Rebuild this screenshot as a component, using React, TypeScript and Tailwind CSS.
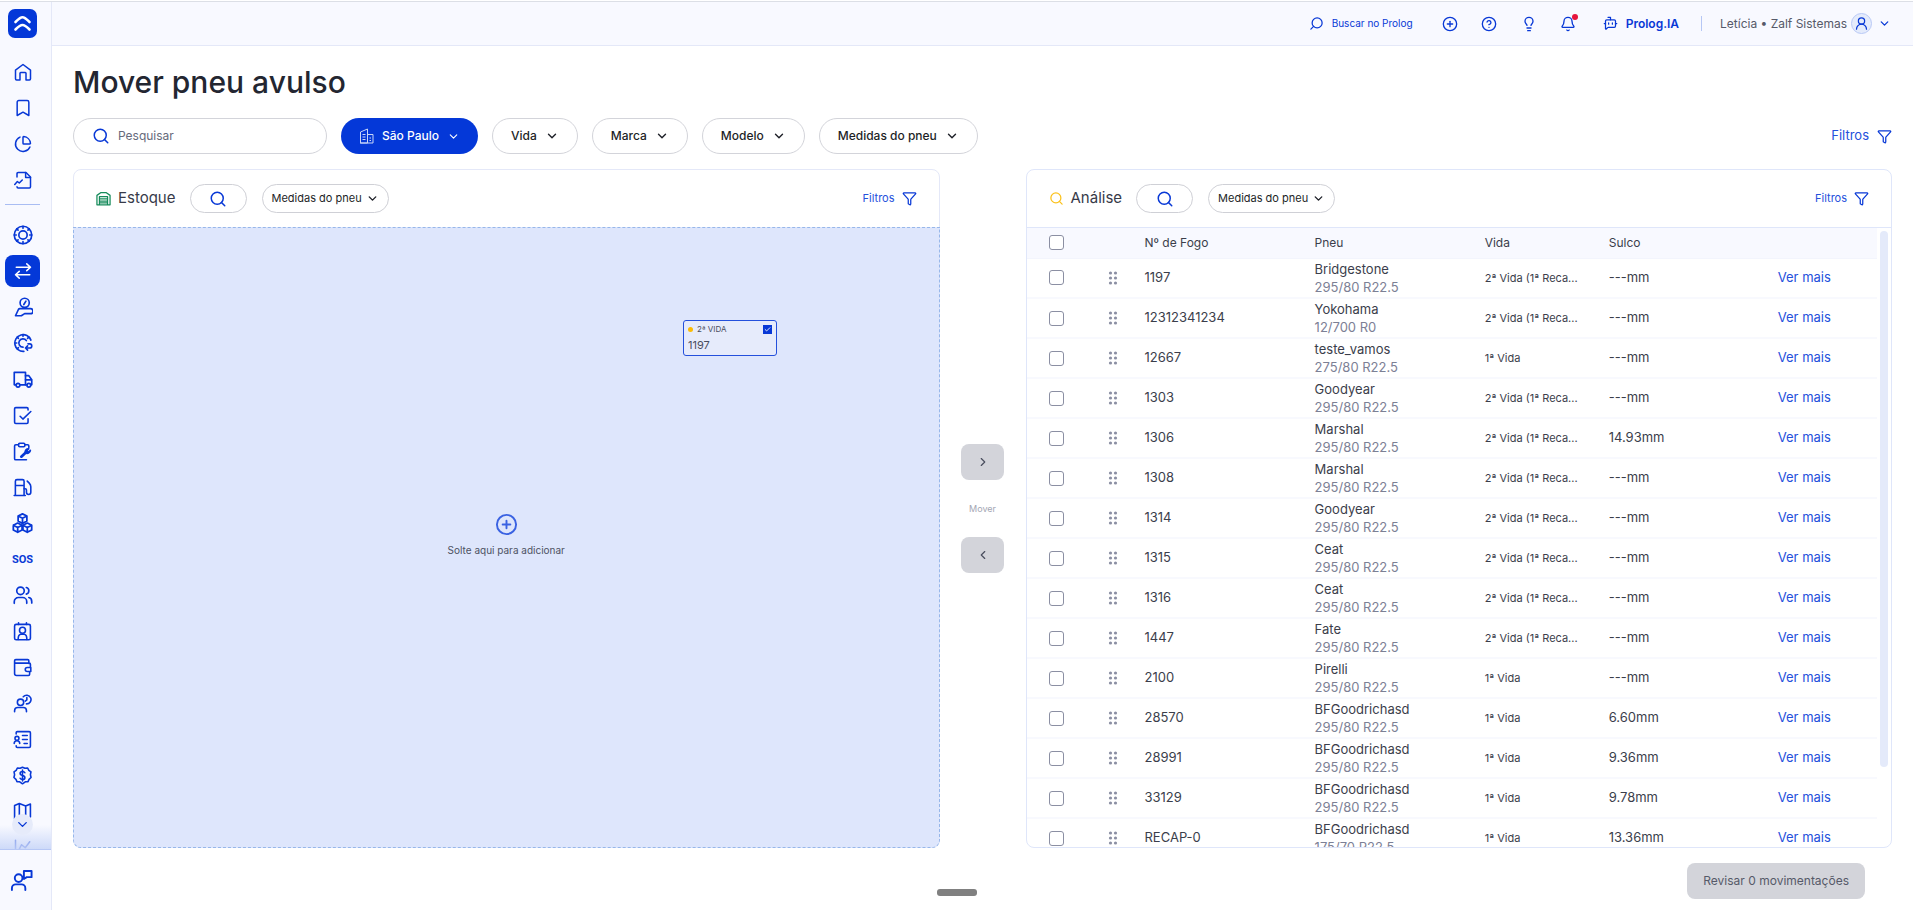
import React from "react";
import {
  Bell,
  Bookmark,
  BotMessageSquare,
  ChartPie,
  Check,
  ChevronDown,
  ChevronLeft,
  ChevronRight,
  CircleHelp,
  CirclePlus,
  Funnel,
  Lightbulb,
  Search,
  UserRound,
} from "lucide-react";

const Svg = ({ children, size = 18 }: { children: React.ReactNode; size?: number }) => (
  <svg
    width={size}
    height={size}
    viewBox="0 0 24 24"
    fill="none"
    stroke="currentColor"
    strokeWidth="2"
    strokeLinecap="round"
    strokeLinejoin="round"
    className="shrink-0"
    aria-hidden="true"
  >
    {children}
  </svg>
);

const topLinks = [
  {
    label: "Início",
    icon: (
      <Svg>
        <path d="M2 9.500 12 2l10 7.500V21a1.500 1.500 0 0 1-1.500 1.500H16v-9a1 1 0 0 0-1-1H9a1 1 0 0 0-1 1v9H3.500A1.500 1.500 0 0 1 2 21z" />
      </Svg>
    ),
  },
  { label: "Favoritos", icon: <Bookmark size={20} strokeWidth={1.8} /> },
  { label: "Painéis", icon: <ChartPie size={18} /> },
  {
    label: "Relatórios",
    icon: (
      <Svg>
        <path d="M4 8V3.500A1.500 1.500 0 0 1 5.500 2H16l6 6v13a1.500 1.500 0 0 1-1.500 1.500H5.500A1.500 1.500 0 0 1 4 21" />
        <path d="M15.500 2v6.500H22" />
        <path d="m1 18 3.500-4 2.500 2 4-4" />
      </Svg>
    ),
  },
];

const links = [
  {
    label: "Pneus",
    icon: (
      <Svg size={20}>
        <circle cx="12" cy="12" r="10.500" />
        <circle cx="12" cy="12" r="5" />
        <path d="M12 1.500V4M12 20v2.500M1.500 12H4M20 12h2.500M4.600 4.600l1.500 1.500M17.900 17.900l1.500 1.500M4.600 19.400l1.500-1.500M17.900 6.100l1.500-1.500" />
      </Svg>
    ),
  },
  {
    label: "Movimentação",
    active: true,
    icon: (
      <Svg>
        <path d="M3 7h19M17 2.500 22 7l-5 4.500M21 17H2M7 12.500 2 17l5 4.500" />
      </Svg>
    ),
  },
  {
    label: "Aferição",
    icon: (
      <Svg size={20}>
        <circle cx="14" cy="7" r="5.500" />
        <path d="m13 9 2.500-4" />
        <path d="M3 22.500 6.500 15a2 2 0 0 1 2-1H21a2 2 0 0 1 0 6h-7l-4 2.500z" />
      </Svg>
    ),
  },
  {
    label: "Recapagem",
    icon: (
      <Svg size={20}>
        <path d="M21.500 8.500A10 10 0 1 0 13 22" />
        <path d="M16 9a5 5 0 1 0-4 8" />
        <path d="M12 2v2M2 12h2.500M5 5l1.500 1.500M5 19l1.500-1.500M19 5l-1.500 1.500" />
        <path d="M15 18h5a2.500 2.500 0 0 0 0-5h-2M17.500 15.500 15 18l2.500 2.500" />
      </Svg>
    ),
  },
  {
    label: "Veículos",
    icon: (
      <Svg size={20}>
        <path d="M4 19H1.500V4H15v15H8" />
        <path d="M15 8h4l3.500 5v6H22M15 19h1" />
        <circle cx="6" cy="19.500" r="2.200" />
        <circle cx="19" cy="19.500" r="2.200" />
        <path d="M15 13h7" />
      </Svg>
    ),
  },
  {
    label: "Checklist",
    icon: (
      <Svg size={19}>
        <path d="M19 5V3.500A1.500 1.500 0 0 0 17.500 2h-14A1.500 1.500 0 0 0 2 3.500v17A1.500 1.500 0 0 0 3.500 22h14a1.500 1.500 0 0 0 1.500-1.500V16" />
        <path d="m9 13 3.500 3.500L22.500 7" />
      </Svg>
    ),
  },
  {
    label: "Ordens de serviço",
    icon: (
      <Svg size={19}>
        <path d="M7 3.500H3.500A1.500 1.500 0 0 0 2 5v16a1.500 1.500 0 0 0 1.500 1.500H17M15 3.500h3.500A1.500 1.500 0 0 1 20 5v2" />
        <rect x="7" y="1.500" width="8" height="4.500" rx="1.500" />
        <path d="m10.500 18.500 7-6.500" strokeWidth="3.500" />
        <path d="M22 10.500 19.500 13l-2-2 2.500-2.500a4 4 0 0 0-4.500 5 4 4 0 0 0 6.500-3z" fill="currentColor" />
      </Svg>
    ),
  },
  {
    label: "Abastecimento",
    icon: (
      <Svg size={19}>
        <path d="M3 22V4a2 2 0 0 1 2-2h7a2 2 0 0 1 2 2v18M1.500 22h14M3 9.500h11" />
        <path d="M14 13.500h1.500a1.500 1.500 0 0 1 1.500 1.500v3a2.500 2.500 0 0 0 5.500 0v-7c0-2-.5-3-2-4.500L18 4" />
      </Svg>
    ),
  },
  {
    label: "Estoque",
    icon: (
      <Svg size={21}>
        <path d="m12 1 5 2.500v5.700L12 12 7 9.200V3.500zM7 3.500 12 6l5-2.500M12 6v6" />
        <path d="m6.500 11.500 5 2.500v5.500l-5 2.500-5-2.500V14zM1.500 14l5 2.500 5-2.500M6.500 16.500V22" />
        <path d="m17.500 11.500 5 2.500v5.500l-5 2.500-5-2.500V14zM12.500 14l5 2.500 5-2.500M17.500 16.500V22" />
      </Svg>
    ),
  },
  {
    label: "Socorro",
    icon: (
      <span className="font-['Liberation_Sans_Narrow','Roboto',sans-serif] text-[11px] font-bold leading-none">SOS</span>
    ),
  },
  {
    label: "Usuários",
    icon: (
      <Svg size={20}>
        <circle cx="9" cy="7" r="4.500" />
        <path d="M1.500 22v-2a5 5 0 0 1 5-5h5a5 5 0 0 1 5 5v2" />
        <path d="M16 3c4 1 4 7 0 8M19 15c2.500.5 3.500 2.500 3.500 5v1.500" />
      </Svg>
    ),
  },
  {
    label: "Crachás",
    icon: (
      <Svg size={19}>
        <rect x="2" y="3" width="20" height="19.500" rx="2" />
        <path d="M7 1v2M17 1v2" />
        <circle cx="12" cy="10.500" r="3.800" />
        <path d="M6.500 22c0-4 1-6 3-6.500h5c2 .5 3 2.500 3 6.500" />
      </Svg>
    ),
  },
  {
    label: "Financeiro",
    icon: (
      <Svg size={19}>
        <path d="M20 7V3.500A1.500 1.500 0 0 0 18.500 2h-15A1.500 1.500 0 0 0 2 3.500v16A2.500 2.500 0 0 0 4.500 22h15a1.500 1.500 0 0 0 1.500-1.500V18M2 6.500h18.500A1.500 1.500 0 0 1 22 8v3" />
        <path d="M22.500 12H18a2.500 2.500 0 0 0 0 5h4.500z" />
      </Svg>
    ),
  },
  {
    label: "Jornada",
    icon: (
      <Svg size={19}>
        <circle cx="9.500" cy="10.500" r="4" />
        <path d="M2 22.500V21a4 4 0 0 1 4-4h7a4 4 0 0 1 4 4v1.500" />
        <path d="M13 3.500a5.500 5.500 0 1 1 4 9M17.500 4.500V7.500L15.500 9" />
      </Svg>
    ),
  },
  {
    label: "Cadastros",
    icon: (
      <Svg size={19}>
        <path d="M4 5V3.500A1.500 1.500 0 0 1 5.500 2h15A1.500 1.500 0 0 1 22 3.500v17a1.500 1.500 0 0 1-1.500 1.500h-15A1.500 1.500 0 0 1 4 20.500V20" />
        <path d="M12 7h6M12 12h6M14 17h4" />
        <circle cx="5" cy="10.500" r="2.500" />
        <path d="M1.500 17c0-2.500 1.500-3.500 3.500-3.500S8.500 14.500 8.500 17" />
      </Svg>
    ),
  },
  {
    label: "Custos",
    icon: (
      <Svg size={19}>
        <path d="m12 1.500 3 1.300 3.500-.3 1.500 3 2.700 2-.7 3.500.8 3.500-2.500 2.300-1.300 3-3.500.2L12 22.500 8.500 20l-3.500-.2-1.300-3-2.500-2.300L2 11l-.7-3.500 2.700-2 1.500-3 3.500.3z" />
        <path d="M15 8.500c-.5-1-1.500-1.500-3-1.500-4 0-4 4.500 0 5s4 5 0 5c-1.500 0-2.500-.5-3-1.500M12 5v14" />
      </Svg>
    ),
  },
  {
    label: "Mapa",
    icon: (
      <Svg size={19}>
        <path d="M2 21V4.500L8 2l8 3 6-2.500V19M8 2v19M16 5v17" />
      </Svg>
    ),
  },
];

const filters = ["Vida", "Marca", "Modelo", "Medidas do pneu"];

const recap = "2ª Vida (1ª Reca...";

const tires = [
  { id: "1197", brand: "Bridgestone", size: "295/80 R22.5", life: recap, depth: "---mm" },
  { id: "12312341234", brand: "Yokohama", size: "12/700 R0", life: recap, depth: "---mm" },
  { id: "12667", brand: "teste_vamos", size: "275/80 R22.5", life: "1ª Vida", depth: "---mm" },
  { id: "1303", brand: "Goodyear", size: "295/80 R22.5", life: recap, depth: "---mm" },
  { id: "1306", brand: "Marshal", size: "295/80 R22.5", life: recap, depth: "14.93mm" },
  { id: "1308", brand: "Marshal", size: "295/80 R22.5", life: recap, depth: "---mm" },
  { id: "1314", brand: "Goodyear", size: "295/80 R22.5", life: recap, depth: "---mm" },
  { id: "1315", brand: "Ceat", size: "295/80 R22.5", life: recap, depth: "---mm" },
  { id: "1316", brand: "Ceat", size: "295/80 R22.5", life: recap, depth: "---mm" },
  { id: "1447", brand: "Fate", size: "295/80 R22.5", life: recap, depth: "---mm" },
  { id: "2100", brand: "Pirelli", size: "295/80 R22.5", life: "1ª Vida", depth: "---mm" },
  { id: "28570", brand: "BFGoodrichasd", size: "295/80 R22.5", life: "1ª Vida", depth: "6.60mm" },
  { id: "28991", brand: "BFGoodrichasd", size: "295/80 R22.5", life: "1ª Vida", depth: "9.36mm" },
  { id: "33129", brand: "BFGoodrichasd", size: "295/80 R22.5", life: "1ª Vida", depth: "9.78mm" },
  { id: "RECAP-0", brand: "BFGoodrichasd", size: "175/70 R22.5", life: "1ª Vida", depth: "13.36mm" },
];

const checkboxClass =
  "block size-[15px] appearance-none rounded-[3px] border border-[#8b8fa3] bg-white";

function Sidebar() {
  return (
    <aside className="flex w-[52px] shrink-0 flex-col border-r border-[#e4e8f8] bg-[#f8f9ff] text-[#0838d6]">
      <a href="#" aria-label="Prolog" className="ml-2 mt-[7px] block size-[29px] shrink-0">
        <svg viewBox="0 0 29 29" className="size-full" aria-hidden="true">
          <rect width="29" height="29" rx="7" fill="#0438d8" />
          <path
            d="M7.500 13c3-3 4.500-4.800 7-4.800s4 1.800 7 4.800M7.500 20.500c3-3 4.500-4.500 7-4.500s4 1.500 7 4.500"
            fill="none"
            stroke="#fff"
            strokeWidth="2.600"
            strokeLinecap="round"
          />
        </svg>
      </a>
      <nav className="relative mt-4 flex min-h-0 flex-1 flex-col overflow-hidden">
        {topLinks.map((link) => (
          <a key={link.label} href="#" aria-label={link.label} className="flex h-9 w-[45px] shrink-0 items-center justify-center">
            {link.icon}
          </a>
        ))}
        <hr className="mx-[5px] mb-3 mt-1.5 w-[35px] shrink-0 border-[#a9bdf3]" />
        {links.map((link) => (
          <a key={link.label} href="#" aria-label={link.label} className="flex h-9 w-[45px] shrink-0 items-center justify-center">
            {link.active ? (
              <span className="flex h-8 w-[35px] items-center justify-center rounded-lg bg-[#0438d8] text-white">{link.icon}</span>
            ) : (
              link.icon
            )}
          </a>
        ))}
        <a href="#" aria-label="Indicadores" className="flex h-9 w-[45px] shrink-0 items-center justify-center opacity-60">
          <Svg>
            <path d="M2 3v18h20M6 17l4-8 5 4 6-8" />
          </Svg>
        </a>
        <div className="absolute inset-x-0 bottom-0 h-6 bg-linear-to-t from-[#c3d2f7]/80 to-transparent" />
        <button
          type="button"
          aria-label="Ver mais itens"
          className="absolute bottom-[14px] left-3 flex size-[21px] items-center justify-center rounded-full bg-[#e6ebfa]"
        >
          <ChevronDown size={15} strokeWidth={2.2} />
        </button>
      </nav>
      <a href="#" aria-label="Atendimento" className="flex h-[61px] w-full shrink-0 items-center justify-center border-t border-[#b6c7f5] pr-2">
        <Svg size={23}>
          <circle cx="9" cy="9.500" r="4" />
          <path d="M2 22v-2a4 4 0 0 1 4-4h6a4 4 0 0 1 4 4v2" />
          <path d="M14.500 2h8v6.500h-5l-3 2z" />
        </Svg>
      </a>
    </aside>
  );
}

function Header() {
  return (
    <header className="flex h-[44px] shrink-0 items-center justify-end border-b border-[#e4e8f8] bg-[#f8f9ff] pr-[22px] text-[#0838d6]">
      <button type="button" className="flex items-center gap-2 text-[10px]">
        <Search size={15} className="-scale-x-100" />
        Buscar no Prolog
      </button>
      <div className="ml-[18px] flex">
        <button type="button" aria-label="Adicionar" className="flex w-[38px] justify-center">
          <CirclePlus size={16} />
        </button>
        <button type="button" aria-label="Ajuda" className="flex w-10 justify-center">
          <CircleHelp size={16} />
        </button>
        <button type="button" aria-label="Novidades" className="flex w-10 justify-center">
          <Lightbulb size={16} />
        </button>
        <button type="button" aria-label="Notificações" className="relative flex w-[38px] justify-center">
          <Bell size={16} />
          <span className="absolute -top-0.5 right-[9px] size-1.5 rounded-full bg-[#e6143c]" />
        </button>
      </div>
      <button type="button" className="ml-4 flex items-center gap-2 text-[12px] font-semibold">
        <BotMessageSquare size={15} />
        Prolog.IA
      </button>
      <span className="ml-[22px] h-[15px] w-px bg-[#b6c7f5]" />
      <button type="button" className="ml-[18px] flex items-center text-[12px] text-[#565a69]">
        Letícia • Zalf Sistemas
        <span className="ml-1 flex size-[21px] items-center justify-center rounded-full border border-[#b9c9f6] bg-[#e4ebfb] text-[#0838d6]">
          <UserRound size={15} />
        </span>
        <ChevronDown size={13} className="ml-1.5 text-[#0838d6]" strokeWidth={2.4} />
      </button>
    </header>
  );
}

type PanelHeaderProps = { title: string; icon: React.ReactNode };

function PanelHeader({ title, icon }: PanelHeaderProps) {
  return (
    <div className="flex h-[57px] shrink-0 items-center px-[22px]">
      {icon}
      <h2 className="ml-[7px] text-[15px] text-[#373a49]">{title}</h2>
      <button
        type="button"
        aria-label={`Pesquisar em ${title}`}
        className="ml-[14px] flex h-[29px] w-[57px] items-center justify-center rounded-full border border-[#cfd0d6] text-[#0838d6]"
      >
        <Search size={18} />
      </button>
      <button
        type="button"
        className="ml-[15px] flex h-[29px] items-center gap-1 rounded-full border border-[#cfd0d6] px-[9px] text-[11px] text-[#1d1f27]"
      >
        Medidas do pneu
        <ChevronDown size={13} strokeWidth={2.6} />
      </button>
      <button type="button" className="ml-auto flex items-center gap-[7px] text-[11px] text-[#2450dc]">
        Filtros
        <Funnel size={15} className="text-[#0838d6]" />
      </button>
    </div>
  );
}

function DropPanel() {
  return (
    <section className="flex min-w-0 flex-1 flex-col rounded-lg border border-[#e4e8f8]">
      <PanelHeader
        title="Estoque"
        icon={
          <svg width="15" height="15" viewBox="0 0 24 24" fill="none" stroke="#168b5b" strokeWidth="2" strokeLinejoin="round" aria-hidden="true">
            <path d="M1.500 22V7L8 2.500h8L22.500 7v15zM5.500 22V9h13v13M5.500 12.500h13M5.500 16h13M5.500 19h13" />
          </svg>
        }
      />
      <div className="relative -m-px mt-0 flex flex-1 flex-col items-center justify-center rounded-b-lg border border-dashed border-[#97b7ea] bg-[#dee6fc] pb-1">
        <CirclePlus size={23} className="text-[#3a62e2]" strokeWidth={2} />
        <p className="mt-1.5 text-[10px] leading-4 text-[#4d5263]">Solte aqui para adicionar</p>

        {/* tire being dragged */}
        <div className="absolute left-[609px] top-[92px] flex h-9 w-[94px] flex-col rounded-[3px] border border-[#2450dc] bg-[#e6ebfb] px-1 text-[#4a4e5e]">
          <label className="flex h-4 items-center text-[8px]">
            <span className="mr-1 size-[5px] rounded-full bg-[#fbbc05]" />
            2ª VIDA
            <input type="checkbox" defaultChecked className="ml-auto size-[9px] appearance-none bg-[#0838d6]" />
            <Check size={7} strokeWidth={3} className="pointer-events-none absolute right-[5px] text-white" />
          </label>
          <span className="text-[11px] leading-4">1197</span>
        </div>
      </div>
    </section>
  );
}

function TirePanel() {
  return (
    <section className="flex min-w-0 flex-1 flex-col overflow-hidden rounded-lg border border-[#dfe6fa]">
      <PanelHeader title="Análise" icon={<Search size={15} className="text-[#fbc21d]" />} />
      <div className="flex min-h-0 flex-1 border-t border-[#dfe6fa]">
        <div className="min-w-0 flex-1 overflow-hidden">
          <table className="w-full table-fixed text-left text-[13px] text-[#3b3e4b]">
            <colgroup>
              <col className="w-[73px]" />
              <col className="w-[45px]" />
              <col className="w-[20%]" />
              <col className="w-[20%]" />
              <col className="w-[124px]" />
              <col className="w-[169px]" />
              <col />
            </colgroup>
            <thead>
              <tr className="h-[30px] border-b border-[#f3f5fd] bg-[#f8f9ff]">
                <th className="pl-[22px]">
                  <input type="checkbox" aria-label="Selecionar todos" className={checkboxClass} />
                </th>
                <th />
                <th className="text-[12px] font-normal">Nº de Fogo</th>
                <th className="text-[12px] font-normal">Pneu</th>
                <th className="text-[12px] font-normal">Vida</th>
                <th className="text-[12px] font-normal">Sulco</th>
                <th />
              </tr>
            </thead>
            <tbody>
              {tires.map((tire) => (
                <tr key={tire.id} className="h-10 border-b-2 border-[#f8f9fe]">
                  <td className="pl-[22px]">
                    <input type="checkbox" aria-label={`Selecionar pneu ${tire.id}`} className={checkboxClass} />
                  </td>
                  <td>
                    <svg width="10" height="16" viewBox="0 0 10 16" className="ml-2" fill="#8b8fa3" aria-hidden="true">
                      <circle cx="2.500" cy="3" r="1.600" />
                      <circle cx="7.500" cy="3" r="1.600" />
                      <circle cx="2.500" cy="8" r="1.600" />
                      <circle cx="7.500" cy="8" r="1.600" />
                      <circle cx="2.500" cy="13" r="1.600" />
                      <circle cx="7.500" cy="13" r="1.600" />
                    </svg>
                  </td>
                  <td>{tire.id}</td>
                  <td className="leading-[18px]">
                    <div>{tire.brand}</div>
                    <div className="text-[#7c8095]">{tire.size}</div>
                  </td>
                  <td className="whitespace-nowrap text-[11px]">{tire.life}</td>
                  <td>{tire.depth}</td>
                  <td>
                    <a href="#" className="text-[#2450dc]">
                      Ver mais
                    </a>
                  </td>
                </tr>
              ))}
            </tbody>
          </table>
        </div>
        <div className="w-[14px] shrink-0 pl-[3px] pt-[3px]">
          <div className="h-[87%] w-2 rounded-full bg-[#e4eafa]" />
        </div>
      </div>
    </section>
  );
}

export default function App() {
  return (
    <div className="flex h-screen flex-col border-t border-white bg-white font-['Inter',sans-serif] antialiased">
      <div className="h-px shrink-0 bg-[#dcdfe6]" />
      <div className="flex min-h-0 flex-1">
        <Sidebar />
        <div className="flex min-w-0 flex-1 flex-col">
          <Header />
          <main className="flex min-h-0 flex-1 flex-col pl-[21px] pr-[21px]">
            <h1 className="mt-4 text-[30px] font-medium leading-10 text-[#232631]">Mover pneu avulso</h1>

            {/* Filters */}
            <div className="mt-4 flex items-center gap-[14px] text-[12px] font-medium text-[#1d1f27]">
              <label className="flex h-9 w-[254px] items-center gap-2 rounded-full border border-[#d3d4da] px-[18px] text-[#0838d6]">
                <Search size={18} />
                <input
                  type="text"
                  aria-label="Pesquisar"
                  placeholder="Pesquisar"
                  className="min-w-0 flex-1 text-[12px] font-normal outline-none placeholder:text-[#666a7b]"
                />
              </label>
              <button type="button" className="flex h-9 items-center rounded-full bg-[#0438d8] px-[18px] text-white">
                <svg width="15" height="16" viewBox="0 0 15 16" fill="none" stroke="#c8d5f8" className="mr-2" aria-hidden="true">
                  <path d="M1.500 15V4L8.500 1v14zM8.500 6.500H14V15H1M3.500 6.500h3M3.500 9h3M3.500 11.500h3M10.500 10h1.500M10.500 12.500h1.500" />
                </svg>
                São Paulo
                <ChevronDown size={13} className="ml-2" />
              </button>
              {filters.map((filter) => (
                <button key={filter} type="button" className="flex h-9 items-center gap-2 rounded-full border border-[#d3d4da] px-[18px]">
                  {filter}
                  <ChevronDown size={14} strokeWidth={2.4} />
                </button>
              ))}
              <button type="button" className="ml-auto flex items-center gap-2 text-[13px] font-normal text-[#2450dc]">
                Filtros
                <Funnel size={15} className="text-[#0838d6]" />
              </button>
            </div>

            {/* Panels */}
            <div className="mt-[15px] flex min-h-0 flex-1">
              <DropPanel />
              <div className="flex w-[86px] shrink-0 flex-col items-center pt-[275px]">
                <button type="button" aria-label="Mover para Análise" className="flex h-9 w-[43px] items-center justify-center rounded-lg bg-[#d3d4da] text-[#4a4e5e]">
                  <ChevronRight size={14} />
                </button>
                <span className="my-[20px] text-[9px] leading-[17px] text-[#a3a6b3]">Mover</span>
                <button type="button" aria-label="Mover para Estoque" className="flex h-9 w-[43px] items-center justify-center rounded-lg bg-[#d3d4da] text-[#4a4e5e]">
                  <ChevronLeft size={14} />
                </button>
              </div>
              <TirePanel />
            </div>

            <footer className="flex h-[62px] shrink-0 justify-end pr-[27px] pt-[15px]">
              <button type="button" className="h-9 rounded-lg bg-[#d3d4da] px-4 text-[12px] text-[#565a69]">
                Revisar 0 movimentações
              </button>
            </footer>
          </main>
        </div>
      </div>
      <div className="fixed bottom-[14px] left-1/2 h-[7px] w-10 -translate-x-1/2 rounded-[3px] bg-[#808080]" />
    </div>
  );
}
